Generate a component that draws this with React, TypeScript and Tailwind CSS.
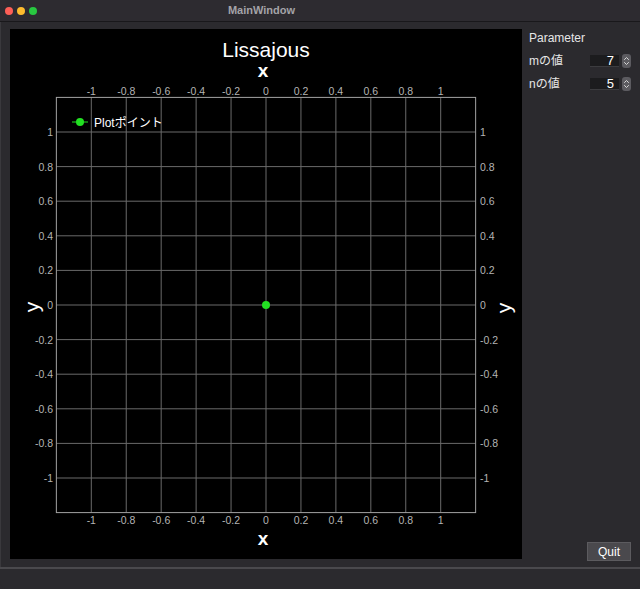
import React from 'react';

const FONT = '"Liberation Sans", "Noto Sans CJK JP", sans-serif';

// plot geometry (svg coords, origin = top-left of black canvas)
const W = 512;
const H = 530;
const CX = 256;
const CY = 276;
const SX = 174.7;
const SY = 173;
const ticks = [-1, -0.8, -0.6, -0.4, -0.2, 0, 0.2, 0.4, 0.6, 0.8, 1];
const fmt = (v: number) => (Math.abs(v) < 1e-9 ? '0' : String(Math.round(v * 10) / 10));

function Plot() {
  const x0 = CX - 1.2 * SX;
  const x1 = CX + 1.2 * SX;
  const y0 = CY - 1.2 * SY;
  const y1 = CY + 1.2 * SY;
  return (
    <svg width={W} height={H} className="block" style={{ fontFamily: FONT }}>
      <rect width={W} height={H} fill="#000" />
      {ticks.map((t) => (
        <line key={'vx' + t} x1={CX + t * SX} x2={CX + t * SX} y1={y0} y2={y1} stroke="#6a6a6a" strokeWidth={1} />
      ))}
      {ticks.map((t) => (
        <line key={'hy' + t} x1={x0} x2={x1} y1={CY - t * SY} y2={CY - t * SY} stroke="#6a6a6a" strokeWidth={1} />
      ))}
      <rect x={x0} y={y0} width={x1 - x0} height={y1 - y0} fill="none" stroke="#a3a3a3" strokeWidth={1} />

      {ticks.map((t) => (
        <g key={'lx' + t} fill="#b4b4b4" fontSize={10.5} textAnchor="middle">
          <text x={CX + t * SX} y={66}>{fmt(t)}</text>
          <text x={CX + t * SX} y={495}>{fmt(t)}</text>
        </g>
      ))}
      {ticks.map((t) => (
        <g key={'ly' + t} fill="#b4b4b4" fontSize={10.5}>
          <text x={43} y={CY - t * SY + 4} textAnchor="end">{fmt(t)}</text>
          <text x={470} y={CY - t * SY + 4}>{fmt(t)}</text>
        </g>
      ))}

      <text x={256} y={28} fill="#fff" fontSize={21} textAnchor="middle">Lissajous</text>
      <text x={253} y={48} fill="#fff" fontSize={19} fontWeight="bold" textAnchor="middle">x</text>
      <text x={253} y={516} fill="#fff" fontSize={19} fontWeight="bold" textAnchor="middle">x</text>
      <text x={0} y={0} fill="#fff" fontSize={21} textAnchor="middle" transform="translate(29 278) rotate(-90)">y</text>
      <text x={0} y={0} fill="#fff" fontSize={21} textAnchor="middle" transform="translate(501 279) rotate(-90)">y</text>

      <line x1={62} x2={78} y1={93} y2={93} stroke="#22e022" strokeWidth={1} />
      <circle cx={70} cy={93} r={4} fill="#22e022" />
      <text x={84} y={98} fill="#fff" fontSize={12}>Plotポイント</text>

      <circle cx={CX} cy={CY} r={4} fill="#22e022" />
    </svg>
  );
}

function SpinBox({ value }: { value: number }) {
  return (
    <div className="flex items-center gap-[3px]">
      <div className="w-[29px] h-[12px] bg-[#1c1c1e] border-b border-[#3c3c3f] flex items-center justify-end pr-[5px] text-[13px] leading-none text-white">
        {value}
      </div>
      <div className="w-[9px] h-[14px] rounded-[3px] bg-[#5c5b60] flex flex-col items-center justify-center">
        <svg width="7" height="12" viewBox="0 0 7 12" fill="none" stroke="#d8d8d8" strokeWidth="1" strokeLinecap="round" strokeLinejoin="round">
          <path d="M1.5 4.5 L3.5 2.5 L5.5 4.5" />
          <path d="M1.5 7.5 L3.5 9.5 L5.5 7.5" />
        </svg>
      </div>
    </div>
  );
}

export default function App() {
  return (
    <div className="w-[640px] h-[589px] bg-[#2b2a2e] flex flex-col overflow-hidden" style={{ fontFamily: FONT }}>
      <div className="h-[22px] shrink-0 bg-[#2d2b30] border-b border-[#19181b] flex items-center relative">
        <div className="flex items-center gap-[4px] pl-[5px]">
          <span className="w-[8px] h-[8px] rounded-full bg-[#fe5f57]" />
          <span className="w-[8px] h-[8px] rounded-full bg-[#febc2e]" />
          <span className="w-[8px] h-[8px] rounded-full bg-[#28c840]" />
        </div>
        <div className="absolute left-0 w-[523px] top-0 h-[21px] flex items-center justify-center text-[11px] font-bold text-[#a4a3a8]">
          MainWindow
        </div>
      </div>

      <div className="flex flex-1 pl-[9px] pt-[7px] border-l border-[#3a393d]">
        <div className="w-[512px] h-[530px] shrink-0">
          <Plot />
        </div>
        <div className="flex-1 flex flex-col pl-[7px] pr-[9px]">
          <div className="text-[12px] text-[#e6e6e6] pt-[2px] leading-[14px]">Parameter</div>
          <div className="flex items-center justify-between mt-[9px] h-[14px]">
            <span className="text-[12px] text-[#e6e6e6]">mの値</span>
            <SpinBox value={7} />
          </div>
          <div className="flex items-center justify-between mt-[9px] h-[14px]">
            <span className="text-[12px] text-[#e6e6e6]">nの値</span>
            <SpinBox value={5} />
          </div>
          <div className="flex-1" />
          <div className="flex justify-end mb-[6px]">
            <button className="w-[44px] h-[19px] bg-[#4a494d] border border-[#5c5b5f] text-[12px] text-white leading-none">
              Quit
            </button>
          </div>
        </div>
      </div>

      <div className="h-[22px] shrink-0 border-t-2 border-[#4a494d] bg-[#2b2a2e] rounded-b-[8px]" />
    </div>
  );
}
